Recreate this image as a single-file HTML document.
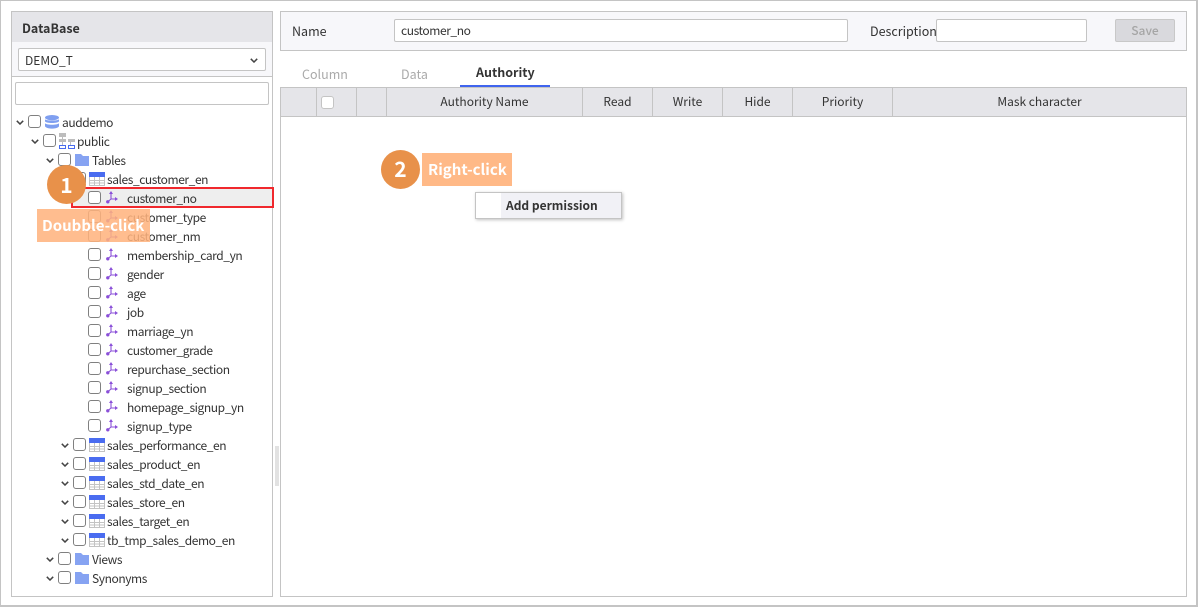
<!DOCTYPE html>
<html><head><meta charset="utf-8">
<style>
html,body{margin:0;padding:0}
body{width:1198px;height:607px;position:relative;overflow:hidden;background:#fff;font-family:"Noto Sans CJK KR","Liberation Sans",sans-serif;font-size:12px;color:#333}
.a{position:absolute;box-sizing:border-box}
.t{position:absolute;white-space:nowrap;line-height:18px;height:18px;margin-top:1px;letter-spacing:-.42px}
.n{margin-top:0;letter-spacing:0}
.cb{position:absolute;width:13px;height:13px;box-sizing:border-box;border:1px solid #808080;border-radius:3px;background:#fff}
.ic{position:absolute}
.h{position:absolute;top:88px;height:28px;line-height:27px;text-align:center;color:#333;font-size:12px}
.s{position:absolute;top:88px;width:1px;height:28px;background:#c4c4c4}
</style></head>
<body>
<svg width="0" height="0" style="position:absolute">
<symbol id="chev" viewBox="0 0 8 5"><path d="M.8.8 4 4 7.2.8" fill="none" stroke="#444" stroke-width="1.5"/></symbol>
<symbol id="col" viewBox="0 0 12 13"><path d="M5 1.5V8H11M5 8 1.5 11" fill="none" stroke="#8a4fd8" stroke-width="1.1"/><path d="M5 0 7 3H3Z" fill="#8a4fd8"/><circle cx="1.8" cy="10.8" r="1.7" fill="#8a4fd8"/><path d="M12 8 9 6V10Z" fill="#8a4fd8"/></symbol>
<symbol id="tbl" viewBox="0 0 16 14"><rect x="0" y="0" width="16" height="14" fill="#fff"/><rect x="0" y="0" width="16" height="5" fill="#4a6cf0"/><path d="M.5 5V13.5H15.5V5M.5 8.5H15.5M.5 11H15.5M5.5 5V13.5M10.5 5V13.5" fill="none" stroke="#c3c3c3" stroke-width="1"/></symbol>
<symbol id="fld" viewBox="0 0 14 12"><path d="M0 0H6L8 2H14V12H0Z" fill="#86a3f2"/></symbol>
</svg>

<!-- outer frame -->
<div class="a" style="left:0;top:0;width:1198px;height:607px;border:2px solid #c4c4c4;border-left-width:1px;border-top-width:1px"></div>

<!-- left panel -->
<div class="a" style="left:11px;top:11px;width:262px;height:586px;border:1px solid #c4c4c4;background:#fff"></div>
<div class="a" style="left:12px;top:12px;width:260px;height:30px;background:#e5e5e9"></div>
<div class="t n" style="left:22px;top:19px;font-weight:700;font-size:12.5px;color:#333">DataBase</div>
<div class="a" style="left:12px;top:42px;width:260px;height:35px;background:#f7f7fa;border-bottom:1px solid #c4c4c4"></div>
<div class="a" style="left:18px;top:48px;width:248px;height:23px;background:#fff;border:1px solid #c4c4c4;border-radius:2px"></div>
<div class="t n" style="left:25px;top:52px;color:#333">DEMO_T</div>
<svg class="ic" style="left:250px;top:58px" width="8" height="5"><use href="#chev"/></svg>
<div class="a" style="left:15px;top:82px;width:254px;height:23px;background:#fff;border:1px solid #c4c4c4;border-radius:2px"></div>

<!-- selected row -->
<div class="a" style="left:71px;top:187px;width:203px;height:21px;background:#eee;border:2px solid #f0282d"></div>

<!-- tree row 1 -->
<svg class="ic" style="left:16px;top:120px" width="8" height="5"><use href="#chev"/></svg>
<div class="cb" style="left:28px;top:115px"></div>
<svg class="ic" style="left:45px;top:115px" width="14" height="14" viewBox="0 0 14 14"><ellipse cx="7" cy="2.6" rx="7" ry="2.6" fill="#7f9ff0"/><path d="M0 4.2C1.5 6 12.5 6 14 4.2V6.4C12.5 8.6 1.5 8.6 0 6.4Z" fill="#7f9ff0"/><path d="M0 8.2C1.5 10.2 12.5 10.2 14 8.2V11.2C12.5 14.4 1.5 14.4 0 11.2Z" fill="#7f9ff0"/></svg>
<div class="t" style="left:62px;top:113px">auddemo</div>

<!-- row 2 -->
<svg class="ic" style="left:31px;top:139px" width="8" height="5"><use href="#chev"/></svg>
<div class="cb" style="left:43px;top:134px"></div>
<svg class="ic" style="left:59px;top:133px" width="16" height="16" viewBox="0 0 16 16"><rect x="0" y="0" width="7" height="4" fill="#bdbdbd"/><rect x="0" y="6" width="7" height="3" fill="#bdbdbd"/><rect x="9" y="6" width="7" height="3" fill="#bdbdbd"/><rect x="3" y="4" width="1" height="8" fill="#bdbdbd"/><rect x="11" y="9" width="1" height="3" fill="#bdbdbd"/><rect x=".5" y="12.5" width="6" height="3" fill="none" stroke="#4a6cf0"/><rect x="9.5" y="12.5" width="6" height="3" fill="none" stroke="#4a6cf0"/></svg>
<div class="t" style="left:77px;top:132px">public</div>

<!-- row 3 -->
<svg class="ic" style="left:46px;top:158px" width="8" height="5"><use href="#chev"/></svg>
<div class="cb" style="left:58px;top:153px"></div>
<svg class="ic" style="left:75px;top:154px" width="14" height="12"><use href="#fld"/></svg>
<div class="t" style="left:92px;top:151px">Tables</div>

<!-- sales_customer_en -->
<svg class="ic" style="left:61px;top:177px" width="8" height="5"><use href="#chev"/></svg>
<div class="cb" style="left:73px;top:172px"></div>
<svg class="ic" style="left:89px;top:172px" width="16" height="14"><use href="#tbl"/></svg>
<div class="t" style="left:107px;top:170px">sales_customer_en</div>

<!-- columns -->
<div class="cb" style="left:88px;top:191px"></div><svg class="ic" style="left:106px;top:191px" width="12" height="13"><use href="#col"/></svg><div class="t" style="left:127px;top:189px">customer_no</div>
<div class="cb" style="left:88px;top:210px"></div><svg class="ic" style="left:106px;top:210px" width="12" height="13"><use href="#col"/></svg><div class="t" style="left:127px;top:208px">customer_type</div>
<div class="cb" style="left:88px;top:229px"></div><svg class="ic" style="left:106px;top:229px" width="12" height="13"><use href="#col"/></svg><div class="t" style="left:127px;top:227px">customer_nm</div>
<div class="cb" style="left:88px;top:248px"></div><svg class="ic" style="left:106px;top:248px" width="12" height="13"><use href="#col"/></svg><div class="t" style="left:127px;top:246px">membership_card_yn</div>
<div class="cb" style="left:88px;top:267px"></div><svg class="ic" style="left:106px;top:267px" width="12" height="13"><use href="#col"/></svg><div class="t" style="left:127px;top:265px">gender</div>
<div class="cb" style="left:88px;top:286px"></div><svg class="ic" style="left:106px;top:286px" width="12" height="13"><use href="#col"/></svg><div class="t" style="left:127px;top:284px">age</div>
<div class="cb" style="left:88px;top:305px"></div><svg class="ic" style="left:106px;top:305px" width="12" height="13"><use href="#col"/></svg><div class="t" style="left:127px;top:303px">job</div>
<div class="cb" style="left:88px;top:324px"></div><svg class="ic" style="left:106px;top:324px" width="12" height="13"><use href="#col"/></svg><div class="t" style="left:127px;top:322px">marriage_yn</div>
<div class="cb" style="left:88px;top:343px"></div><svg class="ic" style="left:106px;top:343px" width="12" height="13"><use href="#col"/></svg><div class="t" style="left:127px;top:341px">customer_grade</div>
<div class="cb" style="left:88px;top:362px"></div><svg class="ic" style="left:106px;top:362px" width="12" height="13"><use href="#col"/></svg><div class="t" style="left:127px;top:360px">repurchase_section</div>
<div class="cb" style="left:88px;top:381px"></div><svg class="ic" style="left:106px;top:381px" width="12" height="13"><use href="#col"/></svg><div class="t" style="left:127px;top:379px">signup_section</div>
<div class="cb" style="left:88px;top:400px"></div><svg class="ic" style="left:106px;top:400px" width="12" height="13"><use href="#col"/></svg><div class="t" style="left:127px;top:398px">homepage_signup_yn</div>
<div class="cb" style="left:88px;top:419px"></div><svg class="ic" style="left:106px;top:419px" width="12" height="13"><use href="#col"/></svg><div class="t" style="left:127px;top:417px">signup_type</div>

<!-- other tables -->
<svg class="ic" style="left:61px;top:443px" width="8" height="5"><use href="#chev"/></svg><div class="cb" style="left:73px;top:438px"></div><svg class="ic" style="left:89px;top:438px" width="16" height="14"><use href="#tbl"/></svg><div class="t" style="left:107px;top:436px">sales_performance_en</div>
<svg class="ic" style="left:61px;top:462px" width="8" height="5"><use href="#chev"/></svg><div class="cb" style="left:73px;top:457px"></div><svg class="ic" style="left:89px;top:457px" width="16" height="14"><use href="#tbl"/></svg><div class="t" style="left:107px;top:455px">sales_product_en</div>
<svg class="ic" style="left:61px;top:481px" width="8" height="5"><use href="#chev"/></svg><div class="cb" style="left:73px;top:476px"></div><svg class="ic" style="left:89px;top:476px" width="16" height="14"><use href="#tbl"/></svg><div class="t" style="left:107px;top:474px">sales_std_date_en</div>
<svg class="ic" style="left:61px;top:500px" width="8" height="5"><use href="#chev"/></svg><div class="cb" style="left:73px;top:495px"></div><svg class="ic" style="left:89px;top:495px" width="16" height="14"><use href="#tbl"/></svg><div class="t" style="left:107px;top:493px">sales_store_en</div>
<svg class="ic" style="left:61px;top:519px" width="8" height="5"><use href="#chev"/></svg><div class="cb" style="left:73px;top:514px"></div><svg class="ic" style="left:89px;top:514px" width="16" height="14"><use href="#tbl"/></svg><div class="t" style="left:107px;top:512px">sales_target_en</div>
<svg class="ic" style="left:61px;top:538px" width="8" height="5"><use href="#chev"/></svg><div class="cb" style="left:73px;top:533px"></div><svg class="ic" style="left:89px;top:533px" width="16" height="14"><use href="#tbl"/></svg><div class="t" style="left:107px;top:531px">tb_tmp_sales_demo_en</div>

<svg class="ic" style="left:46px;top:557px" width="8" height="5"><use href="#chev"/></svg><div class="cb" style="left:58px;top:552px"></div><svg class="ic" style="left:75px;top:553px" width="14" height="12"><use href="#fld"/></svg><div class="t" style="left:92px;top:550px">Views</div>
<svg class="ic" style="left:46px;top:576px" width="8" height="5"><use href="#chev"/></svg><div class="cb" style="left:58px;top:571px"></div><svg class="ic" style="left:75px;top:572px" width="14" height="12"><use href="#fld"/></svg><div class="t" style="left:92px;top:569px">Synonyms</div>

<!-- splitter handle -->
<div class="a" style="left:275px;top:446px;width:4px;height:40px;background:#e2e2e2"></div>

<!-- right top bar -->
<div class="a" style="left:280px;top:11px;width:907px;height:40px;background:#f7f7fa;border:1px solid #c4c4c4"></div>
<div class="t n" style="left:292px;top:22px;font-size:12.5px">Name</div>
<div class="a" style="left:394px;top:19px;width:454px;height:23px;background:#fff;border:1px solid #c4c4c4;border-radius:2px"></div>
<div class="t n" style="left:401px;top:22px;letter-spacing:-.42px">customer_no</div>
<div class="t n" style="left:870px;top:22px;font-size:12.5px">Description</div>
<div class="a" style="left:936px;top:19px;width:151px;height:23px;background:#fff;border:1px solid #c4c4c4;border-radius:2px"></div>
<div class="a" style="left:1115px;top:19px;width:60px;height:23px;background:#d9d9dd;border:1px solid #c8c8c8;border-radius:2px;text-align:center;line-height:22px;color:#a5a5a5;font-weight:500">Save</div>

<!-- tabs -->
<div class="t n" style="left:302px;top:65px;color:#aaa;font-size:12.5px">Column</div>
<div class="t n" style="left:401px;top:65px;color:#aaa;font-size:12.5px">Data</div>
<div class="t n" style="left:476px;top:63px;font-weight:700;font-size:12.5px;color:#333">Authority</div>
<div class="a" style="left:460px;top:85px;width:90px;height:2px;background:#3f64ee"></div>

<!-- grid -->
<div class="a" style="left:280px;top:87px;width:907px;height:510px;background:#fff;border:1px solid #c4c4c4"></div>
<div class="a" style="left:281px;top:88px;width:905px;height:29px;background:#e5e5e9;border-bottom:1px solid #c4c4c4"></div>
<div class="s" style="left:316px"></div>
<div class="s" style="left:356px"></div>
<div class="s" style="left:386px"></div>
<div class="s" style="left:582px"></div>
<div class="s" style="left:652px"></div>
<div class="s" style="left:722px"></div>
<div class="s" style="left:792px"></div>
<div class="s" style="left:892px"></div>
<div class="cb" style="left:321px;top:96px;border-color:#c4c4c4"></div>
<div class="h" style="left:387px;width:195px">Authority Name</div>
<div class="h" style="left:583px;width:69px">Read</div>
<div class="h" style="left:653px;width:69px">Write</div>
<div class="h" style="left:723px;width:69px">Hide</div>
<div class="h" style="left:793px;width:99px">Priority</div>
<div class="h" style="left:893px;width:293px">Mask character</div>

<!-- context menu -->
<div class="a" style="left:475px;top:192px;width:147px;height:27px;background:#f1f1f6;border:1px solid #c4c4c4;box-shadow:1px 1px 3px rgba(0,0,0,.25)"></div>
<div class="a" style="left:476px;top:193px;width:25px;height:25px;background:#fff"></div>
<div class="t n" style="left:506px;top:197px;font-weight:700;color:#333;font-size:12px">Add permission</div>

<!-- callout 2 -->
<div class="a" style="left:381px;top:150px;width:39px;height:39px;border-radius:50%;background:#e8914a"></div>
<div class="t n" style="left:381px;top:159px;width:39px;text-align:center;color:#fff;font-weight:700;font-size:21px;line-height:20px;height:20px">2</div>
<div class="a" style="left:422px;top:153px;width:90px;height:33px;background:#ffb987"></div>
<div class="t n" style="left:428px;top:160px;color:#fff;font-weight:700;font-size:15px;line-height:20px;height:20px">Right-click</div>

<!-- callout 1 -->
<div class="a" style="left:37px;top:209px;width:113px;height:33px;background:rgba(255,178,125,.86)"></div>
<div class="t n" style="left:42px;top:216px;color:#fff;font-weight:700;font-size:15px;line-height:20px;height:20px">Doubble-click</div>
<div class="a" style="left:47px;top:165px;width:39px;height:39px;border-radius:50%;background:#e8914a"></div>
<div class="t n" style="left:47px;top:175px;width:39px;text-align:center;color:#fff;font-weight:700;font-size:21px;line-height:20px;height:20px">1</div>
</body></html>
